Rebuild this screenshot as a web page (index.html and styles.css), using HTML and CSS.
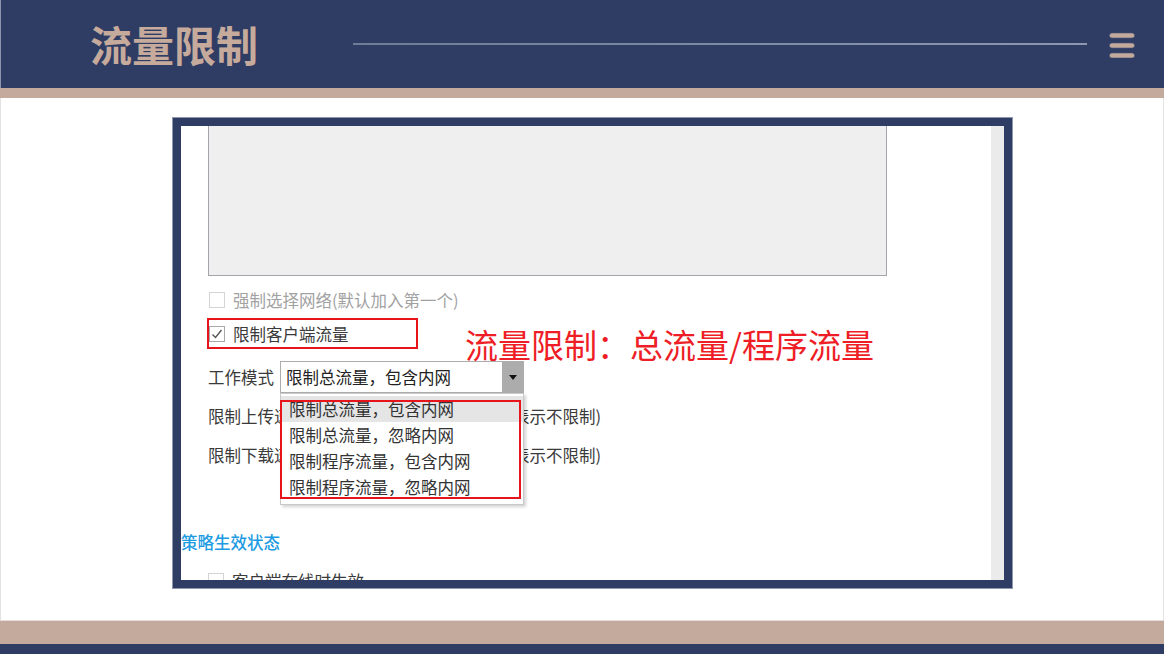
FILE: index.html
```html
<html>
<head>
<title>流量限制</title>
<link rel="stylesheet" href="styles.css">
</head>
<body>

<div class="slide">
  <header class="top">
    <h1 class="title">流量限制</h1>
    <div class="rule"></div>
    <svg class="menu" width="26" height="26" viewBox="0 0 26 26">
      <rect x="0.5" y="1" width="25" height="5" rx="2.5" fill="#c4aa9c" stroke="#4b5675" stroke-width="0.6"/>
      <rect x="0.5" y="11" width="25" height="5" rx="2.5" fill="#c4aa9c" stroke="#4b5675" stroke-width="0.6"/>
      <rect x="0.5" y="21" width="25" height="5" rx="2.5" fill="#c4aa9c" stroke="#4b5675" stroke-width="0.6"/>
    </svg>
  </header>
  <div class="band"></div>

  <main class="content">
    <div class="frame">
      <div class="pane">
        <div class="listbox"></div>

        <div class="row row-disabled">
          <span class="check check-off"></span>
          <span>强制选择网络(默认加入第一个)</span>
        </div>

        <div class="row row-marked">
          <span class="check">
            <svg width="14" height="14" viewBox="0 0 14 14"><path d="M2.5 7.5 L5.5 10.5 L11.5 3" fill="none" stroke="#555" stroke-width="1.4"/></svg>
          </span>
          <span>限制客户端流量</span>
        </div>

        <div class="row row-mode">
          <span class="mode-label">工作模式</span>
          <div class="combo">
            <span class="combo-text">限制总流量，包含内网</span>
            <span class="combo-btn"><span class="arrow"></span></span>
          </div>
        </div>

        <div class="row row-speed">
          <span>限制上传速度</span>
          <span>KB/s (0表示不限制)</span>
        </div>
        <div class="row row-speed row-speed2">
          <span>限制下载速度</span>
          <span>KB/s (0表示不限制)</span>
        </div>

        <div class="section">策略生效状态</div>

        <div class="row row-last">
          <span class="check check-off"></span>
          <span>客户端在线时生效</span>
        </div>

        <ul class="dropdown">
          <li class="active">限制总流量，包含内网</li>
          <li>限制总流量，忽略内网</li>
          <li>限制程序流量，包含内网</li>
          <li>限制程序流量，忽略内网</li>
        </ul>
        <div class="mark mark-list"></div>
      </div>
      <div class="scrollbar"></div>
    </div>

    <div class="note">流量限制：总流量/程序流量</div>
  </main>

  <div class="band band-bottom"></div>
  <div class="foot"></div>
</div>

</body>
</html>
```

FILE: styles.css
```css
body {
  margin: 0;
  padding: 0;
  width: 1164px;
  height: 654px;
  overflow: hidden;
  font-family: "Noto Sans CJK SC", "Microsoft YaHei", sans-serif;
  background-color: #fff;
}

.slide {
  width: 1164px;
  height: 654px;
  display: flex;
  flex-direction: column;
  box-shadow: inset 1px 0 0 #e2e2e2, inset -1px 0 0 #e2e2e2;
}

.top {
  height: 88px;
  background-color: #2f3d64;
  display: flex;
  align-items: center;
  padding: 0 29px 0 90px;
  box-shadow: inset 1px 0 0 #8d95aa;
}

.title {
  margin: 0;
  font-size: 42px;
  font-weight: bold;
  line-height: 48px;
  color: #c6aa9c;
  letter-spacing: 0;
}

.rule {
  flex: 1;
  height: 2px;
  margin: 0 22px 0 95px;
  background: linear-gradient(to right, #6f7c98, #8c98b0);
}

.menu {
  display: block;
  margin-top: 2px;
}

.band {
  height: 10px;
  background-color: #c4aa9c;
}

.band-bottom {
  height: 24px;
  border-top: 1px solid #e4dcd8;
  box-sizing: border-box;
}

.foot {
  height: 10px;
  background-color: #2f3d64;
}

.content {
  height: 522px;
  box-sizing: border-box;
  padding: 20px 0 0 173px;
  position: relative;
}

.frame {
  width: 839px;
  height: 470px;
  box-sizing: border-box;
  border: 8px solid #2f3d64;
  box-shadow: 0 0 0 1px #8e97ad;
  background-color: #fff;
  display: flex;
  overflow: hidden;
}

.pane {
  flex: 1;
  position: relative;
  overflow: hidden;
  font-size: 16.5px;
  color: #3a3a3a;
}

.scrollbar {
  width: 13px;
  background-color: #ebebeb;
}

.listbox {
  margin-left: 27px;
  width: 679px;
  height: 150px;
  box-sizing: border-box;
  background-color: #efefef;
  border: 1px solid #a3a5aa;
  border-top: none;
}

.row {
  display: flex;
  align-items: center;
  margin-left: 28px;
  height: 20px;
  line-height: 20px;
}

.check {
  width: 16px;
  height: 16px;
  box-sizing: border-box;
  border: 1px solid #a8a8a8;
  margin-right: 8px;
  display: flex;
  align-items: center;
  justify-content: center;
}

.check-off {
  border-color: #d4d4d4;
}

.row-disabled {
  margin-top: 14px;
  color: #a2a2a2;
}

.row-marked {
  margin-top: 8px;
  margin-left: 26px;
  width: 211px;
  height: 31px;
  box-sizing: border-box;
  border: 2px solid #e8141c;
}

.row-mode {
  margin-top: 12px;
  margin-left: 27px;
  height: 32px;
}

.mode-label {
  width: 72px;
}

.combo {
  width: 244px;
  height: 32px;
  box-sizing: border-box;
  border: 1px solid #adadad;
  display: flex;
  background-color: #fff;
}

.combo-text {
  flex: 1;
  padding-left: 5px;
  line-height: 30px;
  color: #222;
}

.combo-btn {
  width: 21px;
  background-color: #acacac;
  display: flex;
  align-items: center;
  justify-content: center;
}

.arrow {
  width: 0;
  height: 0;
  border-left: 4px solid transparent;
  border-right: 4px solid transparent;
  border-top: 5px solid #111;
}

.row-speed {
  margin-top: 11px;
  margin-left: 27px;
  width: 393px;
  height: 24px;
  justify-content: space-between;
}

.row-speed2 {
  margin-top: 15px;
}

.section {
  margin-top: 64px;
  height: 22px;
  line-height: 22px;
  font-size: 16.5px;
  font-weight: 500;
  color: #1d9be2;
}

.row-last {
  margin-top: 18px;
  margin-left: 27px;
}

.dropdown {
  position: absolute;
  left: 99px;
  top: 267px;
  width: 244px;
  margin: 0;
  padding: 2px 0 4px 0;
  list-style: none;
  box-sizing: border-box;
  background-color: #fff;
  border: 1px solid #c9c9c9;
  box-shadow: 2px 2px 3px rgba(0, 0, 0, 0.18);
}

.dropdown li {
  height: 26px;
  line-height: 26px;
  padding-left: 8px;
  color: #333;
}

.dropdown li.active {
  background-color: #e5e5e5;
}

.mark {
  position: absolute;
  border: 2px solid #e8141c;
  box-sizing: border-box;
}

.mark-list {
  left: 99px;
  top: 274px;
  width: 241px;
  height: 99px;
}

.note {
  position: absolute;
  left: 465px;
  top: 226px;
  font-size: 33px;
  line-height: 40px;
  color: #ee1d26;
  white-space: nowrap;
}
```
